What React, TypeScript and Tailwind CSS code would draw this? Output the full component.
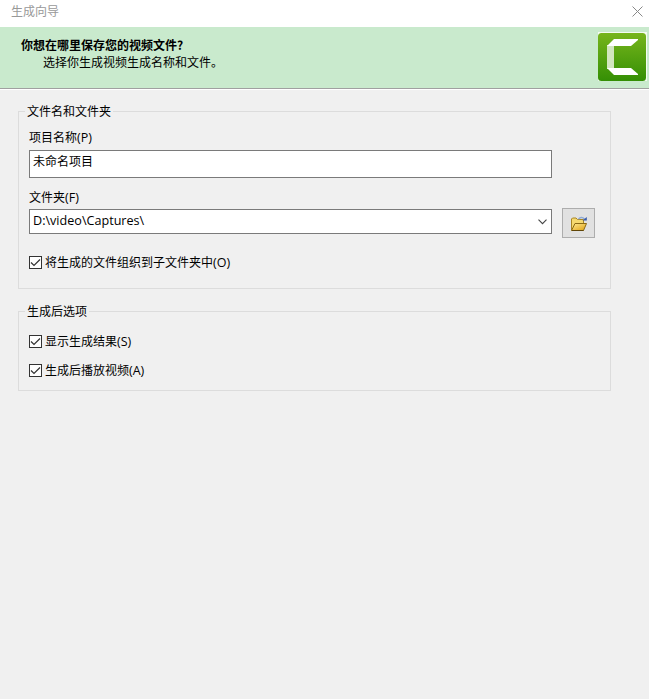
import { useState } from "react";

function Logo() {
  return (
    <svg width="49" height="49" viewBox="0 0 49 49" className="block">
      <defs>
        <linearGradient id="logoGreen" x1="0" y1="0" x2="0" y2="1">
          <stop offset="0" stopColor="#77b51c" />
          <stop offset="1" stopColor="#348f04" />
        </linearGradient>
      </defs>
      <rect width="49" height="49" fill="#f4fbf2" />
      <rect x="0" y="1" width="48" height="48" rx="3.5" fill="url(#logoGreen)" />
      <rect x="9" y="13" width="7" height="24" fill="#d2e6bf" />
      <path d="M9 14 L16 7 H40 V8 L33 14 Z" fill="#fff" />
      <path d="M9 36 H33 L40 42 V43 H16 Z" fill="#fff" />
    </svg>
  );
}

function FolderIcon() {
  return (
    <svg width="18" height="16" viewBox="0 0 18 16" className="block">
      <defs>
        <linearGradient id="folderFront" x1="0" y1="0" x2="1" y2="1">
          <stop offset="0" stopColor="#ffeb94" />
          <stop offset="1" stopColor="#dfa010" />
        </linearGradient>
      </defs>
      <path d="M1.5 14.5 V3 L2.5 2 H6 L7.5 3.5 H13.5 V7.5" fill="#f5d970" stroke="#a98624" />
      <path d="M1.5 14.5 L5 7.5 H16.5 L13.5 14.5 Z" fill="url(#folderFront)" stroke="#8a6914" />
      <path d="M2 14.5 H13.5" stroke="#5f4508" />
      <path d="M8.5 3.3 C9.5 1.2 12.5 0.8 14.5 3" fill="none" stroke="#8fabd6" strokeWidth="1.5" />
      <path d="M16.8 1 V4.5 H12.5 Z" fill="#3a5ca8" />
    </svg>
  );
}

interface CheckProps {
  label: string;
  hotkey: string;
}

function Check({ label, hotkey }: CheckProps) {
  const [checked, setChecked] = useState(true);

  return (
    <button
      type="button"
      role="checkbox"
      aria-checked={checked}
      onClick={() => setChecked(!checked)}
      className="flex h-[13px] items-start"
    >
      <span className="block size-[13px] border border-[#333] bg-white">
        {checked && (
          <svg width="11" height="11" viewBox="0 0 11 11" className="block">
            <path d="M1 5.5 L4 8.5 L10 2.5" fill="none" stroke="#333" strokeWidth="1.2" />
          </svg>
        )}
      </span>
      <span className="-mt-px ml-[3px] whitespace-nowrap leading-[13px]">
        {label}
        <Hotkey letter={hotkey} />
      </span>
    </button>
  );
}

function Hotkey({ letter }: { letter: string }) {
  return <span className="font-['Open_Sans','Noto_Sans',sans-serif] text-[12.5px]">({letter})</span>;
}

export default function App() {
  return (
    <div className="h-[699px] w-[649px] overflow-hidden bg-[#f0f0f0] font-['Noto_Sans_CJK_SC',sans-serif] text-[12px] leading-4 text-black">
      {/* Title bar */}
      <div className="flex h-[27px] items-start justify-between bg-white pl-[11px] pr-[6px]">
        <span className="mt-[3px] text-[#999]">生成向导</span>
        <svg width="11" height="11" viewBox="0 0 11 11" className="mt-[6px]">
          <path d="M0.5 0.5 L10.5 10.5 M10.5 0.5 L0.5 10.5" stroke="#888" />
        </svg>
      </div>

      {/* Wizard header */}
      <header className="flex h-[63px] justify-between border-b border-white bg-[#c9eacd] pl-[21px] pr-[2px] shadow-[inset_0_-1px_0_#a0a0a0]">
        <div className="pt-[10px]">
          <h1 className="font-bold leading-4">你想在哪里保存您的视频文件?</h1>
          <p className="ml-[22px] mt-[1px]">选择你生成视频生成名称和文件。</p>
        </div>
        <div className="pt-[5px]">
          <Logo />
        </div>
      </header>

      <main className="pl-[18px] pt-[13px]">
        {/* File name and folder */}
        <fieldset className="h-[186px] w-[593px] border border-[#dcdcdc] pl-[10px]">
          <legend className="-ml-[4px] h-4 px-[2px]">文件名和文件夹</legend>
          <div className="pt-[10px]">
            <label className="block h-4">
              项目名称
              <Hotkey letter="P" />
            </label>
            <div className="mt-[5px] h-[28px] w-[523px] border border-[#7a7a7a] bg-white pl-[3px] pt-[2px]">
              未命名项目
            </div>
            <label className="mt-[11px] block h-4">
              文件夹
              <Hotkey letter="F" />
            </label>
            <div className="mt-[3px] flex">
              <div className="mt-px flex h-[25px] w-[523px] items-center justify-between border border-[#7a7a7a] bg-white pl-[3px] pr-1">
                <span className="-mt-[2px] font-['Open_Sans','Noto_Sans',sans-serif] text-[12.6px]">D:\video\Captures\</span>
                <svg width="9" height="6" viewBox="0 0 9 6">
                  <path d="M0.5 0.7 L4.5 4.7 L8.5 0.7" fill="none" stroke="#444" strokeWidth="1.1" />
                </svg>
              </div>
              <button
                type="button"
                className="ml-[10px] flex h-[30px] w-[33px] items-center justify-center border border-[#adadad] bg-[#e1e1e1] pt-px"
              >
                <FolderIcon />
              </button>
            </div>
            <div className="mt-[18px]">
              <Check label="将生成的文件组织到子文件夹中" hotkey="O" />
            </div>
          </div>
        </fieldset>

        {/* After production */}
        <fieldset className="mt-[14px] h-[88px] w-[593px] border border-[#dcdcdc] pl-[10px]">
          <legend className="-ml-[4px] h-4 px-[2px]">生成后选项</legend>
          <div className="flex flex-col gap-4 pt-4">
            <Check label="显示生成结果" hotkey="S" />
            <Check label="生成后播放视频" hotkey="A" />
          </div>
        </fieldset>
      </main>
    </div>
  );
}
